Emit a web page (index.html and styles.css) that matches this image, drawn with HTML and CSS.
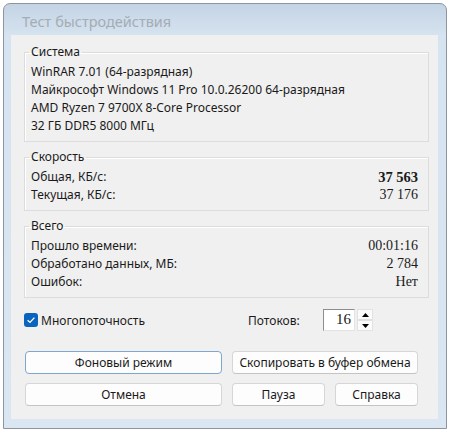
FILE: index.html
```html
<!DOCTYPE html>
<html lang="ru">
<head>
  <meta charset="UTF-8">
  <meta name="viewport" content="width=device-width, initial-scale=1.0">
  <title>Тест быстродействия</title>
  <link rel="stylesheet" href="styles.css">
</head>
<body>

  <div class="window">
    <div class="titlebar">Тест быстродействия</div>

    <div class="client">
      <fieldset class="group">
        <legend>Система</legend>
        <div class="row">WinRAR 7.01 (64-разрядная)</div>
        <div class="row">Майкрософт Windows 11 Pro 10.0.26200 64-разрядная</div>
        <div class="row">AMD Ryzen 7 9700X 8-Core Processor</div>
        <div class="row">32 ГБ DDR5 8000 МГц</div>
      </fieldset>

      <fieldset class="group">
        <legend>Скорость</legend>
        <div class="row"><span>Общая, КБ/с:</span><span class="value bold">37 563</span></div>
        <div class="row"><span>Текущая, КБ/с:</span><span class="value">37 176</span></div>
      </fieldset>

      <fieldset class="group">
        <legend>Всего</legend>
        <div class="row"><span>Прошло времени:</span><span class="value">00:01:16</span></div>
        <div class="row"><span>Обработано данных, МБ:</span><span class="value">2 784</span></div>
        <div class="row"><span>Ошибок:</span><span class="value">Нет</span></div>
      </fieldset>

      <div class="options">
        <label class="check">
          <span class="box">
            <svg width="10" height="10" viewBox="0 0 10 10"><path d="M1.6 5.2 L4 7.4 L8.4 2.6" fill="none" stroke="#fff" stroke-width="1.3"/></svg>
          </span>
          Многопоточность
        </label>
        <span class="threads-label">Потоков:</span>
        <div class="spin">
          <span class="spin-value">16</span>
          <div class="spin-buttons">
            <span class="spin-btn">
              <svg width="7" height="4" viewBox="0 0 7 4"><path d="M0 4 L3.5 0 L7 4 Z" fill="#000"/></svg>
            </span>
            <span class="spin-btn">
              <svg width="7" height="4" viewBox="0 0 7 4"><path d="M0 0 L3.5 4 L7 0 Z" fill="#000"/></svg>
            </span>
          </div>
        </div>
      </div>

      <div class="buttons">
        <button class="button focused">Фоновый режим</button>
        <button class="button wide">Скопировать в буфер обмена</button>
        <button class="button">Отмена</button>
        <button class="button">Пауза</button>
        <button class="button">Справка</button>
      </div>
    </div>
  </div>

</body>
</html>
```

FILE: styles.css
```css
body {
  margin: 0;
  background-color: #ffffff;
  font-family: 'Noto Sans', 'Open Sans', sans-serif;
  font-size: 12px;
  color: #1a1a1a;
}
.window {
  margin: 3px 0 0 3px;
  width: 444px;
  height: 426px;
  box-sizing: border-box;
  border: 1px solid #8e959c;
  border-radius: 7px 7px 0 0;
  background: linear-gradient(#c4d4e5, #d6e3f0 32px, #dae6f2);
  padding: 0 8px 9px 7px;
  display: flex;
  flex-direction: column;
}
.titlebar {
  height: 31px;
  line-height: 35px;
  padding-left: 11px;
  font-size: 14.5px;
  color: #a4acb4;
}
.client {
  flex: 1;
  background-color: #f0f0f0;
  padding: 9px 9px 0 13px;
  display: flex;
  flex-direction: column;
}
.group {
  margin: 0 0 7px 0;
  padding: 3px 10px 6px 6px;
  border: 1px solid #dcdcdc;
  box-shadow: inset 1px 1px #ffffff;
  min-width: 0;
}
.group legend {
  padding: 0 2px;
  margin-left: -2px;
  line-height: 16px;
}
.row {
  display: flex;
  justify-content: space-between;
  line-height: 18px;
  white-space: nowrap;
}
.value {
  font-family: 'Liberation Serif', serif;
  font-size: 14px;
}
.bold {
  font-weight: bold;
  font-size: 14.5px;
}
.options {
  display: flex;
  align-items: center;
  height: 22px;
  margin-top: 4px;
}
.check {
  display: flex;
  align-items: center;
  width: 224px;
}
.box {
  width: 14px;
  height: 14px;
  border-radius: 3px;
  background-color: #0a63bd;
  display: flex;
  align-items: center;
  justify-content: center;
  margin-right: 3px;
}
.threads-label {
  width: 75px;
}
.spin {
  display: flex;
  height: 22px;
}
.spin-value {
  width: 32px;
  box-sizing: border-box;
  background-color: #ffffff;
  border-top: 1px solid #8d8d8d;
  border-left: 1px solid #8d8d8d;
  border-right: 1px solid #e3e3e3;
  border-bottom: 1px solid #e3e3e3;
  font-family: 'Liberation Serif', serif;
  font-size: 15px;
  text-align: right;
  padding-right: 3px;
  line-height: 19px;
}
.spin-buttons {
  display: flex;
  flex-direction: column;
  margin-left: 2px;
}
.spin-btn {
  width: 16px;
  height: 11px;
  box-sizing: border-box;
  background-color: #fbfbfb;
  border: 1px solid #e2e2e2;
  display: flex;
  align-items: center;
  justify-content: center;
}
.buttons {
  display: grid;
  grid-template-columns: 197px 93px 83px;
  grid-auto-rows: 23px;
  column-gap: 10px;
  row-gap: 9px;
  margin: 20px 0 0 1px;
}
.button {
  font-family: 'Noto Sans', 'Open Sans', sans-serif;
  font-size: 12px;
  color: #1a1a1a;
  background-color: #fdfdfd;
  border: 1px solid #d6d6d6;
  border-bottom-color: #c4c4c4;
  border-radius: 4px;
  padding: 0;
}
.button.wide {
  grid-column: span 2;
}
.button.focused {
  border-color: #7ea6cf;
}
```
